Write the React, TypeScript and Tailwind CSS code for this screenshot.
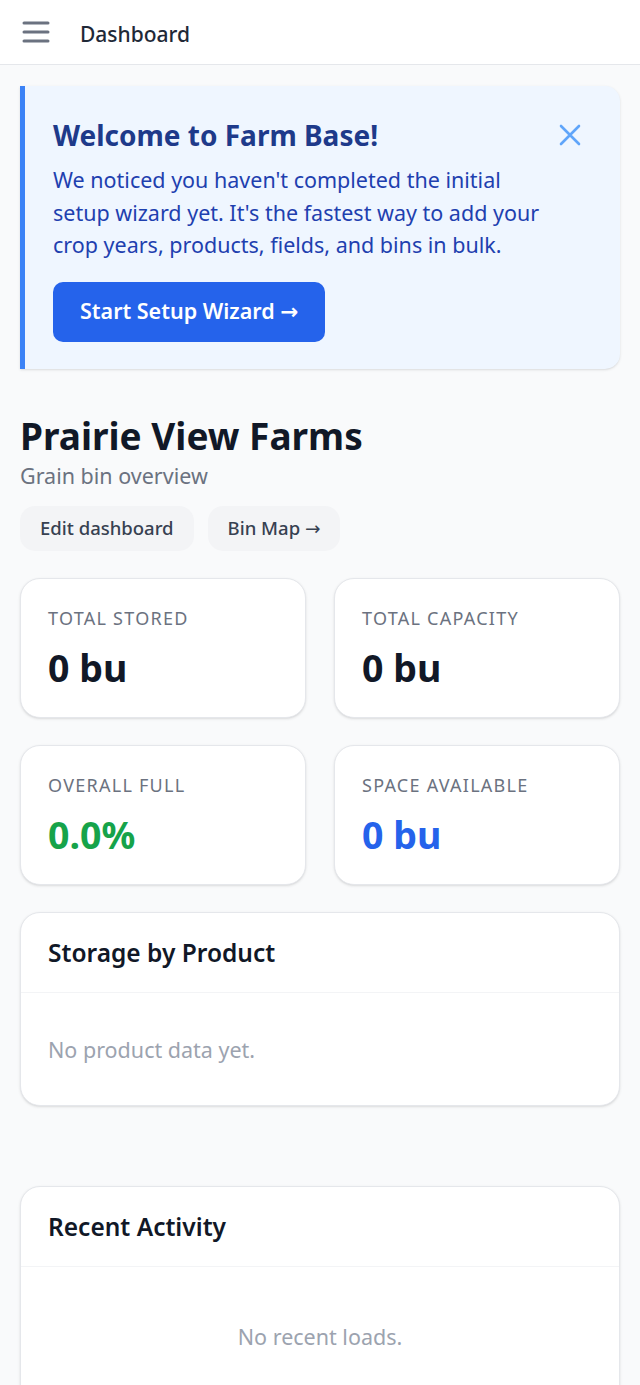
import React from "react";

type Stat = {
  label: string;
  value: string;
  tone: string;
};

const stats: Stat[] = [
  { label: "Total Stored", value: "0 bu", tone: "text-[#111827]" },
  { label: "Total Capacity", value: "0 bu", tone: "text-[#111827]" },
  { label: "Overall Full", value: "0.0%", tone: "text-[#16a34a]" },
  { label: "Space Available", value: "0 bu", tone: "text-[#2563eb]" },
];

function MenuIcon() {
  return (
    <svg width="28" height="24" viewBox="0 0 28 24" fill="none" aria-hidden>
      <path
        d="M2 3h24M2 12h24M2 21h24"
        stroke="#6b7280"
        strokeWidth="3"
        strokeLinecap="round"
      />
    </svg>
  );
}

function CloseIcon() {
  return (
    <svg width="22" height="22" viewBox="0 0 22 22" fill="none" aria-hidden>
      <path
        d="M2 2l18 18M20 2L2 20"
        stroke="#60a5fa"
        strokeWidth="2.6"
        strokeLinecap="round"
      />
    </svg>
  );
}

// arrow glyph is wider in the reference, DejaVu's is closer
function Arrow() {
  return <span style={{ fontFamily: '"DejaVu Sans", sans-serif' }}>→</span>;
}

function Panel({ title, children }: { title: string; children: React.ReactNode }) {
  return (
    <div className="bg-white border border-[#e5e7eb] rounded-[20px] shadow-sm overflow-hidden">
      <div className="px-[27px] py-[22px] border-b border-[#f3f4f6]">
        <h2 className="text-[24.5px] leading-[35px] font-semibold text-[#111827]">{title}</h2>
      </div>
      {children}
    </div>
  );
}

export default function App() {
  return (
    <div
      className="min-h-screen bg-[#f9fafb]"
      style={{ fontFamily: '"Noto Sans", "Open Sans", sans-serif' }}
    >
      <header className="h-[65px] bg-white border-b border-[#e5e7eb] flex items-center">
        <button className="ml-[22px] w-[28px] h-[24px] flex items-center">
          <MenuIcon />
        </button>
        <h1 className="ml-[30px] mt-[3px] text-[21px] leading-[28px] font-medium text-[#1f2937]">
          Dashboard
        </h1>
      </header>

      <main className="px-5 pt-[21px] pb-10">
        {/* setup banner */}
        <div className="bg-[#eff6ff] border-l-[5px] border-[#3b82f6] rounded-r-[15px] shadow-sm pt-[29px] pl-[28px] pr-[28px] pb-[27px] flex items-start">
          <div className="flex-1 pr-[8px]">
            <h2 className="text-[28px] leading-[40px] font-bold text-[#1e3a8a]">
              Welcome to Farm Base!
            </h2>
            <p className="mt-[9px] text-[21.5px] leading-[32.5px] text-[#1e40af]">
              We noticed you haven't completed the initial setup wizard yet. It's the fastest way
              to add your crop years, products, fields, and bins in bulk.
            </p>
            <button className="mt-[20px] bg-[#2563eb] text-white text-[21.5px] leading-[30px] font-semibold px-[27px] py-[14.5px] rounded-[10px]">
              Start Setup Wizard <Arrow />
            </button>
          </div>
          <button className="mt-[4px] mr-[6px] w-[32px] h-[32px] flex items-center justify-center">
            <CloseIcon />
          </button>
        </div>

        {/* farm heading */}
        <div className="mt-[44px]">
          <h2 className="text-[37px] leading-[45px] font-bold text-[#111827]">Prairie View Farms</h2>
          <p className="mt-[3px] text-[21.5px] leading-[30px] text-[#6b7280]">Grain bin overview</p>
          <div className="mt-[15px] flex gap-[14px]">
            <button className="bg-[#f3f4f6] text-[#374151] text-[18.5px] leading-[24px] font-medium px-[20px] py-[10px] rounded-[15px]">
              Edit dashboard
            </button>
            <button className="bg-[#f3f4f6] text-[#374151] text-[18.5px] leading-[24px] font-medium px-[20px] py-[10px] rounded-[15px]">
              Bin Map <Arrow />
            </button>
          </div>
        </div>

        {/* stats */}
        <div className="mt-[27px] grid grid-cols-2 gap-x-[28px] gap-y-[27px]">
          {stats.map((s) => (
            <div
              key={s.label}
              className="bg-white border border-[#e5e7eb] rounded-[20px] shadow-sm px-[27px] pt-[27px] pb-[27px]"
            >
              <div className="text-[18px] leading-[25px] uppercase tracking-[0.07em] text-[#6b7280]">
                {s.label}
              </div>
              <div className={`mt-[14px] text-[37.5px] leading-[45px] font-bold ${s.tone}`}>
                {s.value}
              </div>
            </div>
          ))}
        </div>

        <div className="mt-[27px]">
          <Panel title="Storage by Product">
            <div className="px-[27px] pt-[42px] pb-[40px]">
              <p className="text-[21.5px] leading-[30px] text-[#9ca3af]">No product data yet.</p>
            </div>
          </Panel>
        </div>

        <div className="mt-[80px]">
          <Panel title="Recent Activity">
            <div className="px-[27px] pt-[55px] pb-[55px] text-center">
              <p className="text-[21.5px] leading-[30px] text-[#9ca3af]">No recent loads.</p>
            </div>
          </Panel>
        </div>
      </main>
    </div>
  );
}
